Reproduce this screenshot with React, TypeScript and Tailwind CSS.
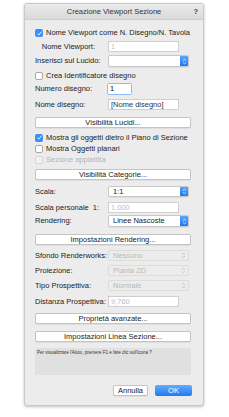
import type { ReactNode } from 'react';

const font = { fontFamily: '"Liberation Sans", Arial, sans-serif' };

function Check({ checked, disabled, children }: { checked?: boolean; disabled?: boolean; children: ReactNode }) {
  return (
    <div className="flex h-[11px] items-center gap-[3px]">
      {checked ? (
        <span className="flex h-[8px] w-[8px] items-center justify-center rounded-[2px] bg-[#3b8ef5]">
          <svg viewBox="0 0 8 8" className="h-[7px] w-[7px]">
            <path d="M1.6 4.2 L3.2 5.8 L6.4 1.8" fill="none" stroke="#fff" strokeWidth="1.1" />
          </svg>
        </span>
      ) : (
        <span
          className={`h-[8px] w-[8px] rounded-[2px] border ${disabled ? 'border-[#d6d6d6] bg-[#f3f3f3]' : 'border-[#a9a9a9] bg-white'}`}
        />
      )}
      <span className={disabled ? 'text-[#b5b5b5]' : 'text-[#222]'}>{children}</span>
    </div>
  );
}

function Label({ children, right }: { children: ReactNode; right?: boolean }) {
  return (
    <div className={`w-[73px] shrink-0 ${right ? 'pr-[13px] text-right' : ''} text-[#222]`}>{children}</div>
  );
}

function Input({ value, disabled, w = 'w-[71px]' }: { value?: string; disabled?: boolean; w?: string }) {
  return (
    <div
      className={`flex h-[11px] ${w} items-center border border-[#cfcfcf] bg-white px-[2px] ${disabled ? 'text-[#c0c0c0]' : 'text-[#333]'}`}
    >
      {value}
    </div>
  );
}

function Arrows({ color }: { color: string }) {
  return (
    <svg viewBox="0 0 6 8" className="h-[7px] w-[5px]">
      <path d="M1.2 3 L3 1.3 L4.8 3 M1.2 5 L3 6.7 L4.8 5" fill="none" stroke={color} strokeWidth="0.9" />
    </svg>
  );
}

function Select({ value, disabled, h = 'h-[12px]' }: { value?: string; disabled?: boolean; h?: string }) {
  if (disabled) {
    return (
      <div className={`flex ${h} w-[81px] items-center justify-between rounded-[2px] border border-[#dcdcdc] bg-[#ececec] pl-[4px] pr-[2px] text-[#b8b8b8]`}>
        <span>{value}</span>
        <Arrows color="#b8b8b8" />
      </div>
    );
  }
  return (
    <div className={`flex ${h} w-[81px] items-stretch overflow-hidden rounded-[2px] border border-[#c8c8c8] bg-white shadow-[0_0.5px_0.5px_rgba(0,0,0,0.12)]`}>
      <span className="flex flex-1 items-center pl-[4px] text-[#222]">{value}</span>
      <span className="flex w-[8px] items-center justify-center bg-gradient-to-b from-[#5aa5fb] to-[#1a78f2]">
        <Arrows color="#fff" />
      </span>
    </div>
  );
}

function Button({ children }: { children: ReactNode }) {
  return (
    <div className="flex h-[11px] w-[156px] items-center justify-center rounded-[2px] border border-[#c4c4c4] bg-white text-[#222] shadow-[0_0.5px_0.5px_rgba(0,0,0,0.12)]">
      {children}
    </div>
  );
}

function Row({ children, mt, h = 'h-[11px]' }: { children: ReactNode; mt: string; h?: string }) {
  return <div className={`flex ${h} ${mt} items-center`}>{children}</div>;
}

export default function App() {
  return (
    <div className="h-[417px] w-[229px] bg-white pl-[24px] pt-[3px] text-[7.5px] leading-none" style={font}>
      <div className="flex h-[403px] w-[180px] flex-col overflow-hidden rounded-[3px] border border-[#c9c9c9] bg-[#ececec] shadow-[0_1px_3px_rgba(0,0,0,0.25)]">
        <div className="relative flex h-[16px] shrink-0 items-center justify-center border-b border-[#cfcfcf] bg-gradient-to-b from-[#ebebeb] to-[#d9d9d9] text-[#333]">
          <span>Creazione Viewport Sezione</span>
          <span className="absolute right-[5px] top-[4px] font-bold text-[#444]">?</span>
        </div>

        <div className="flex flex-col pl-[10px]">
          <Row mt="mt-[7px]" h="h-[12px]">
            <Check checked>Nome Viewport come N. Disegno/N. Tavola</Check>
          </Row>
          <Row mt="mt-[2px]">
            <Label right>Nome Viewport:</Label>
            <Input value="1" disabled />
          </Row>
          <Row mt="mt-[3px]" h="h-[12px]">
            <Label>Inserisci sul Lucido:</Label>
            <Select />
          </Row>
          <Row mt="mt-[3px]" h="h-[12px]">
            <Check>Crea Identificatore disegno</Check>
          </Row>
          <Row mt="mt-[1px]" h="h-[12px]">
            <Label>Numero disegno:</Label>
            <div className="-ml-[1px] rounded-[2px] border-[1.5px] border-[#8fbaf3]">
              <div className="flex h-[10px] w-[23px] items-center bg-white px-[2px] text-[#111]">1</div>
            </div>
          </Row>
          <Row mt="mt-[4px]">
            <Label>Nome disegno:</Label>
            <Input value="[Nome disegno]" />
          </Row>
          <Row mt="mt-[7px]">
            <Button>Visibilità Lucidi...</Button>
          </Row>
          <Row mt="mt-[4px]">
            <Check checked>Mostra gli oggetti dietro il Piano di Sezione</Check>
          </Row>
          <Row mt="mt-0">
            <Check>Mostra Oggetti planari</Check>
          </Row>
          <Row mt="mt-0">
            <Check disabled>Sezione appiattita</Check>
          </Row>
          <Row mt="mt-[4px]">
            <Button>Visibilità Categorie...</Button>
          </Row>
          <Row mt="mt-[6px]">
            <Label>Scala:</Label>
            <Select value="1:1" h="h-[11px]" />
          </Row>
          <Row mt="mt-[5px]">
            <div className="flex w-[73px] shrink-0 gap-[4px] text-[#222]">
              <span>Scala personale</span>
              <span>1:</span>
            </div>
            <Input value="1,000" disabled />
          </Row>
          <Row mt="mt-[2px]" h="h-[12px]">
            <Label>Rendering:</Label>
            <Select value="Linee Nascoste" />
          </Row>
          <Row mt="mt-[7px]">
            <Button>Impostazioni Rendering...</Button>
          </Row>
          <Row mt="mt-[5px]">
            <Label>Sfondo Renderworks:</Label>
            <Select value="Nessuno" disabled h="h-[11px]" />
          </Row>
          <Row mt="mt-[4px]">
            <Label>Proiezione:</Label>
            <Select value="Pianta 2D" disabled h="h-[11px]" />
          </Row>
          <Row mt="mt-[4px]">
            <Label>Tipo Prospettiva:</Label>
            <Select value="Normale" disabled h="h-[11px]" />
          </Row>
          <Row mt="mt-[5px]">
            <Label>Distanza Prospettiva:</Label>
            <Input value="9,760" disabled />
          </Row>
          <Row mt="mt-[6px]">
            <Button>Proprietà avanzate...</Button>
          </Row>
          <Row mt="mt-[7px]">
            <Button>Impostazioni Linea Sezione...</Button>
          </Row>
          <div className="mt-[6px] h-[27px] w-[156px] rounded-[2px] bg-[#e0e0e0] px-[2px] pt-[3px] text-[4.5px] text-[#333]">
            Per visualizzare l'Aiuto, premere F1 e fare clic sull'icona ?
          </div>
          <div className="mt-[10px] flex h-[11px] w-[157px] justify-end gap-[7px]">
            <div className="flex w-[35px] items-center justify-center rounded-[2px] border border-[#c4c4c4] bg-white text-[#222] shadow-[0_0.5px_0.5px_rgba(0,0,0,0.12)]">
              Annulla
            </div>
            <div className="flex w-[37px] items-center justify-center rounded-[2px] bg-gradient-to-b from-[#63abfc] to-[#1b79f3] text-white">
              OK
            </div>
          </div>
        </div>
      </div>
    </div>
  );
}
